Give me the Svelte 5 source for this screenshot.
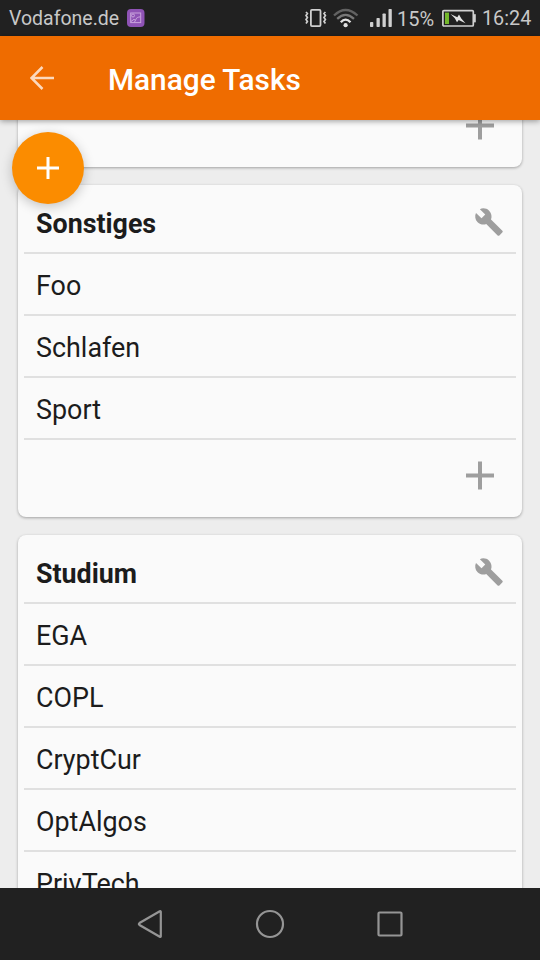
<script>
  const wrenchPath =
    'M22.7 19l-9.1-9.1c.9-2.3.4-5-1.5-6.9-2-2-5-2.4-7.4-1.3L9 6 6 9 1.6 4.7C.4 7.1.9 10.1 2.9 12.1c1.9 1.9 4.6 2.4 6.9 1.5l9.1 9.1c.4.4 1 .4 1.4 0l2.3-2.3c.5-.4.5-1.1.1-1.4z';
  const groups = [
    { title: 'Sonstiges', tasks: ['Foo', 'Schlafen', 'Sport'] },
    { title: 'Studium', tasks: ['EGA', 'COPL', 'CryptCur', 'OptAlgos', 'PrivTech'] },
  ];
</script>

{#snippet plus()}
  <svg class="plus" width="28" height="29" viewBox="0 0 28 29" aria-hidden="true">
    <path d="M0 14.5H28M14 .5V28.500" stroke="currentColor" stroke-width="4" />
  </svg>
{/snippet}

<div class="phone">
  <div class="status">
    <span class="carrier">Vodafone.de</span>
    <svg class="notice" width="18" height="18" viewBox="0 0 18 18" aria-hidden="true">
      <rect width="17.500" height="18" rx="4" fill="#8f53b5" />
      <g fill="none" stroke="#c9a3dd" stroke-width="1">
        <rect x="3.700" y="4" width="10" height="9.600" />
        <circle cx="6" cy="6.500" r="1.500" />
        <path d="M4 12.500l3-2.200 1.500 1.200C8.800 8.800 11 8 13.500 7.800M7.200 13.500l1.200-2" />
      </g>
    </svg>
    <span class="space"></span>
    <svg class="vibrate" width="22" height="18" viewBox="0 0 22 18" fill="none" stroke="#d0d0d0" aria-hidden="true">
      <rect x="5.900" y=".9" width="9.600" height="16.200" rx="1" stroke-width="1.800" />
      <path d="M1 3l1.400 1.500L1 6.500l1.400 2L1 10.500l1.400 2L1 14.500M20.400 3L19 4.500l1.400 2-1.400 2 1.400 2-1.400 2 1.400 2" stroke-width="1.700" />
    </svg>
    <svg class="wifi" width="26" height="20" viewBox="0 0 26 20" fill="none" stroke-width="2.300" aria-hidden="true">
      <path d="M1 7.500Q12.500-3.500 24.500 7.500" stroke="#626262" />
      <path d="M4.200 10.800Q12.500 3 21 10.800" stroke="#777" />
      <path d="M7.800 14.200Q12.500 9 17.500 14.200" stroke="#e2e2e2" />
      <circle cx="12.600" cy="17.200" r="2.100" fill="#e2e2e2" />
    </svg>
    <svg class="signal" width="22" height="18" viewBox="0 0 22 18" fill="#d0d0d0" aria-hidden="true">
      <rect y="13" width="3.300" height="5" rx=".8" />
      <rect x="6.500" y="9" width="3.300" height="9" rx=".8" />
      <rect x="12.500" y="4.500" width="3.300" height="13.500" rx=".8" />
      <rect x="18.500" y="0" width="3.300" height="18" rx=".8" />
    </svg>
    <span class="percent">15%</span>
    <svg class="battery" width="34" height="18" viewBox="0 0 34 18" aria-hidden="true">
      <rect x=".9" y="1.600" width="30.400" height="15.400" rx="1" fill="none" stroke="#d0d0d0" stroke-width="1.700" />
      <rect x="32" y="5" width="1.800" height="8.500" rx=".7" fill="#d0d0d0" />
      <rect x="3" y="3.600" width="4" height="11.400" fill="#75b82c" />
      <path d="M8.500 5l6.800 3.200L17 5.500l2.300 4 4.200 4.800-6.800-3.300-1.700 2.200-2.200-4z" fill="#e2e2e2" />
    </svg>
    <span class="clock">16:24</span>
  </div>

  <header class="appbar">
    <svg class="back" width="24" height="24" viewBox="0 0 24 24" aria-hidden="true">
      <path d="M24 12H2M12.500 1L1.500 12l11 11" fill="none" stroke="#fcd9bd" stroke-width="2.500" />
    </svg>
    <h1>Manage Tasks</h1>
  </header>

  <main class="content">
    <section class="card first">
      <div class="add">{@render plus()}</div>
    </section>
    {#each groups as group}
      <section class="card">
        <div class="row head">
          <h2>{group.title}</h2>
          <svg class="wrench" width="30" height="30" viewBox="0 0 24 24" aria-hidden="true">
            <path d={wrenchPath} fill="#9e9e9e" />
          </svg>
        </div>
        {#each group.tasks as task}
          <div class="row">{task}</div>
        {/each}
        <div class="add">{@render plus()}</div>
      </section>
    {/each}
  </main>

  <div class="fab">
    <svg width="22" height="22" viewBox="0 0 22 22" aria-hidden="true">
      <path d="M0 11H22M11 0V22" stroke="#fff" stroke-width="3" />
    </svg>
  </div>

  <nav class="navbar">
    <svg width="30" height="30" viewBox="0 0 30 30" aria-hidden="true">
      <path d="M25.800 2.800V27.200Q25.800 28.300 24.800 27.700L4.500 16Q3.200 15 4.500 14L24.800 2.300Q25.800 1.700 25.800 2.800Z" />
    </svg>
    <svg width="30" height="30" viewBox="0 0 30 30" aria-hidden="true">
      <circle cx="15" cy="15" r="13" />
    </svg>
    <svg width="30" height="30" viewBox="0 0 30 30" aria-hidden="true">
      <rect x="3.500" y="3.500" width="23" height="23" rx="1" />
    </svg>
  </nav>
</div>

<style>
  :global(body) {
    background: #ededed;
  }
  .phone {
    position: relative;
    display: flex;
    flex-direction: column;
    width: 540px;
    height: 960px;
    overflow: hidden;
    background: #ededed;
    font-family: Roboto, sans-serif;
    color: #1c1c1c;
  }
  .status {
    display: flex;
    flex: none;
    align-items: center;
    box-sizing: border-box;
    height: 36px;
    padding: 0 9px;
    background: #212121;
    color: #c8c8c8;
    font-size: 20px;
    line-height: 24px;
    white-space: nowrap;
  }
  .status span {
    padding-top: 2px;
  }
  .status svg {
    flex: none;
  }
  .carrier {
    font-size: 19.5px;
  }
  .notice {
    margin-left: 8px;
  }
  .space {
    flex: 1;
  }
  .wifi {
    margin-left: 6px;
  }
  .signal {
    margin-left: 11px;
  }
  .percent {
    width: 40px;
    margin-left: 5px;
  }
  .battery {
    margin-left: 5px;
  }
  .clock {
    width: 49px;
    margin-left: 6px;
    font-size: 19.8px;
    text-align: right;
  }
  .appbar {
    display: flex;
    flex: none;
    align-items: center;
    box-sizing: border-box;
    height: 84px;
    padding-left: 30px;
    background: #ef6c00;
    color: #fff;
    box-shadow: 0 1px 6px rgba(0, 0, 0, 0.4);
    z-index: 1;
  }
  h1 {
    margin: 2px 0 0 54px;
    font-size: 29.8px;
    font-weight: 500;
  }
  .content {
    display: flex;
    flex: 1;
    flex-direction: column;
    gap: 18px;
    min-height: 0;
    padding: 0 18px;
    overflow: hidden;
  }
  .card {
    flex: none;
    box-sizing: border-box;
    padding: 5px 6px 0;
    border-radius: 8px;
    background: #fafafa;
    box-shadow: 0 1px 3px rgba(0, 0, 0, 0.32);
  }
  .first {
    height: 83px;
    margin-top: -36px;
    padding-top: 6px;
  }
  .row {
    display: flex;
    align-items: center;
    justify-content: space-between;
    box-sizing: border-box;
    height: 62px;
    padding: 4px 12px 0;
    border-bottom: 2px solid #e0e0e0;
    font-size: 26.9px;
    line-height: 36px;
  }
  .head {
    height: 64px;
    padding-top: 1px;
  }
  h2 {
    margin: 4px 0 0;
    font-size: 26.8px;
    font-weight: 700;
    line-height: 36px;
  }
  .add {
    display: flex;
    align-items: center;
    justify-content: flex-end;
    box-sizing: border-box;
    height: 77px;
    padding: 0 22px 6px 0;
    color: #9e9e9e;
  }
  .plus,
  .wrench {
    flex: none;
  }
  .fab {
    position: absolute;
    top: 132px;
    left: 12px;
    z-index: 2;
    display: grid;
    place-items: center;
    width: 72px;
    height: 72px;
    border-radius: 50%;
    background: #fb8c00;
    box-shadow: 0 3px 12px rgba(0, 0, 0, 0.22);
  }
  .navbar {
    display: flex;
    flex: none;
    align-items: center;
    justify-content: center;
    gap: 90px;
    height: 72px;
    background: #212121;
  }
  .navbar path,
  .navbar circle,
  .navbar rect {
    fill: none;
    stroke: #959595;
    stroke-width: 2.200;
  }
</style>
